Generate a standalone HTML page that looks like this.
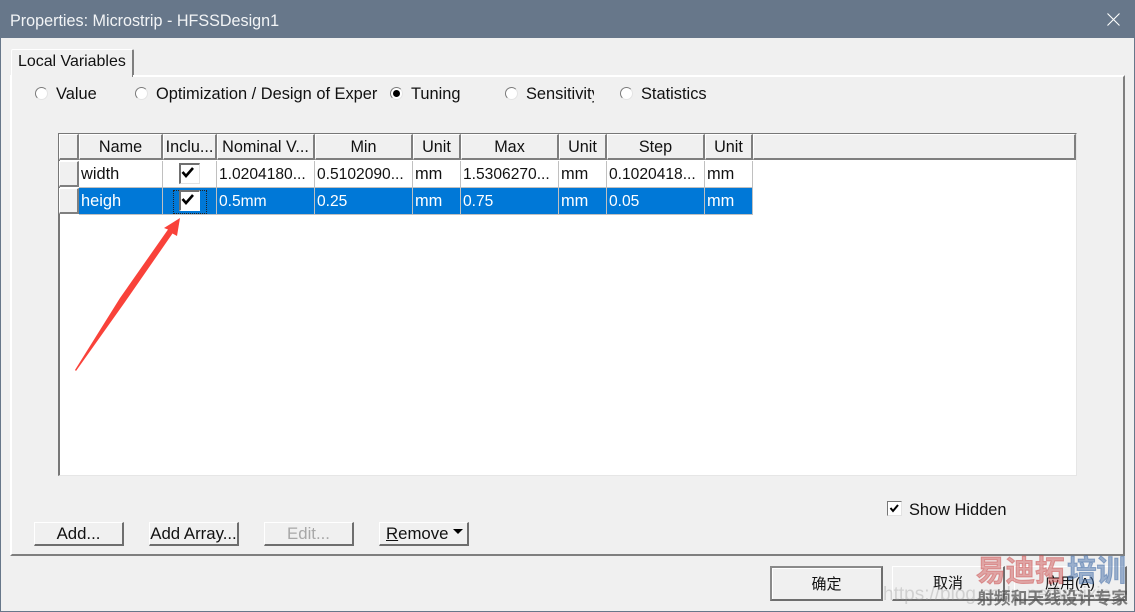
<!DOCTYPE html>
<html>
<head>
<meta charset="utf-8">
<style>
html,body{margin:0;padding:0;}
body{width:1135px;height:612px;position:relative;overflow:hidden;background:#f0f0f0;font-family:"Liberation Sans","Noto Sans CJK SC",sans-serif;font-size:16.4px;color:#111;}
div,span{position:absolute;box-sizing:border-box;white-space:nowrap;}
.lb{line-height:20px;height:20px;}
.hd{top:134px;height:26px;background:#f0f0f0;border-top:1px solid #fff;border-left:1px solid #fff;border-right:2px solid #7f7f7f;border-bottom:2px solid #7f7f7f;text-align:center;line-height:25px;overflow:hidden;font-size:16.2px;}
.rh{left:59px;width:20px;background:#f0f0f0;border-top:1px solid #fff;border-left:1px solid #fff;border-right:2px solid #7f7f7f;border-bottom:2px solid #7f7f7f;}
.c{height:27px;line-height:27px;padding-left:2px;border-right:1px solid #c0c0c0;border-bottom:1px solid #c0c0c0;overflow:hidden;font-size:15.6px;}
.t{font-size:16.4px;}
.s{background:#0078d7;color:#fff;}
.btn{top:522px;height:24px;width:90px;background:#f0f0f0;border-top:1px solid #fff;border-left:1px solid #fff;border-right:2px solid #6e6e6e;border-bottom:2px solid #6e6e6e;text-align:center;line-height:21px;font-size:16.8px;}
.bb{top:566px;height:35px;background:#f0f0f0;text-align:center;line-height:34px;font-size:15px;}
.rad{top:87px;width:13px;height:13px;border-radius:50%;background:#fff;border:1px solid #7a7a7a;border-bottom-color:#e4e4e4;border-right-color:#e4e4e4;}
.cb{background:#fff;border-top:2px solid #707070;border-left:2px solid #707070;border-right:1px solid #e2e2e2;border-bottom:1px solid #e2e2e2;}
svg{position:absolute;overflow:visible;}
</style>
</head>
<body>
<div style="left:0;top:0;width:1135px;height:38px;background:#67778a;"></div>
<div style="left:0;top:38px;width:1px;height:574px;background:#67778a;"></div>
<div style="left:1134px;top:38px;width:1px;height:574px;background:#67778a;"></div>
<div style="left:0;top:611px;width:1135px;height:1px;background:#67778a;"></div>
<div class="lb" style="left:10px;top:11px;color:#f2f4f6;font-size:16.15px;">Properties: Microstrip - HFSSDesign1</div>
<svg style="left:1107px;top:13px;" width="13" height="13"><path d="M0.5 0.5L12.5 12.5M12.5 0.5L0.5 12.5" stroke="#fff" stroke-width="1.1"/></svg>

<!-- tab panel -->
<div style="left:10px;top:75px;width:1115px;height:481px;border-top:2px solid #fff;border-left:2px solid #fff;border-right:2px solid #7f7f7f;border-bottom:2px solid #7f7f7f;"></div>
<div style="left:11px;top:49px;width:123px;height:28px;background:#f0f0f0;border-top:1px solid #fff;border-left:1px solid #fff;border-right:2px solid #7f7f7f;border-radius:2px 2px 0 0;"></div>
<div style="left:133px;top:75px;width:2px;height:2px;background:#fff;"></div>
<div class="lb" style="left:18px;top:52px;font-size:15.95px;">Local Variables</div>

<!-- radios -->
<div class="rad" style="left:35px;"></div><div class="lb" style="left:56px;top:84px;">Value</div>
<div class="rad" style="left:135px;"></div><div class="lb" style="left:156px;top:84px;">Optimization / Design of Exper</div>
<div class="rad" style="left:390px;"></div><div style="left:393px;top:90px;width:7px;height:7px;border-radius:50%;background:#000;"></div><div class="lb" style="left:411px;top:84px;">Tuning</div>
<div class="rad" style="left:505px;"></div><div class="lb" style="left:526px;top:84px;width:68px;overflow:hidden;">Sensitivity</div>
<div class="rad" style="left:620px;"></div><div class="lb" style="left:641px;top:84px;">Statistics</div>

<!-- grid -->
<div style="left:58px;top:133px;width:1019px;height:343px;background:#fff;border-top:1px solid #777;border-left:2px solid #777;border-right:1px solid #e6e6e6;border-bottom:1px solid #e6e6e6;"></div>
<div class="hd" style="left:59px;width:20px;"></div>
<div class="hd" style="left:79px;width:84px;">Name</div>
<div class="hd" style="left:163px;width:54px;">Inclu...</div>
<div class="hd" style="left:217px;width:98px;">Nominal V...</div>
<div class="hd" style="left:315px;width:98px;">Min</div>
<div class="hd" style="left:413px;width:48px;">Unit</div>
<div class="hd" style="left:461px;width:98px;">Max</div>
<div class="hd" style="left:559px;width:48px;">Unit</div>
<div class="hd" style="left:607px;width:98px;">Step</div>
<div class="hd" style="left:705px;width:48px;">Unit</div>
<div class="hd" style="left:753px;width:323px;"></div>

<div class="rh" style="top:161px;height:26px;"></div>
<div class="rh" style="top:188px;height:26px;"></div>

<div class="c t" style="left:79px;top:161px;width:84px;">width</div>
<div class="c" style="left:163px;top:161px;width:54px;"></div>
<div class="c" style="left:217px;top:161px;width:98px;">1.0204180...</div>
<div class="c" style="left:315px;top:161px;width:98px;">0.5102090...</div>
<div class="c t" style="left:413px;top:161px;width:48px;">mm</div>
<div class="c" style="left:461px;top:161px;width:98px;">1.5306270...</div>
<div class="c t" style="left:559px;top:161px;width:48px;">mm</div>
<div class="c" style="left:607px;top:161px;width:98px;">0.1020418...</div>
<div class="c t" style="left:705px;top:161px;width:48px;">mm</div>

<div class="c t s" style="left:79px;top:188px;width:84px;">heigh</div>
<div class="c s" style="left:163px;top:188px;width:54px;"></div>
<div class="c s" style="left:217px;top:188px;width:98px;">0.5mm</div>
<div class="c s" style="left:315px;top:188px;width:98px;">0.25</div>
<div class="c t s" style="left:413px;top:188px;width:48px;">mm</div>
<div class="c s" style="left:461px;top:188px;width:98px;">0.75</div>
<div class="c t s" style="left:559px;top:188px;width:48px;">mm</div>
<div class="c s" style="left:607px;top:188px;width:98px;">0.05</div>
<div class="c t s" style="left:705px;top:188px;width:48px;">mm</div>

<div class="cb" style="left:179px;top:163px;width:21px;height:21px;"></div>
<svg style="left:181px;top:165px;" width="16" height="16"><path d="M1.5 7L5 11L12 3" fill="none" stroke="#000" stroke-width="2.6"/></svg>
<div style="left:173px;top:190px;width:34px;height:24px;border:1px dotted #222;"></div>
<div class="cb" style="left:179px;top:190px;width:21px;height:21px;border-right-color:#fff;border-bottom-color:#fff;"></div>
<svg style="left:181px;top:192px;" width="16" height="16"><path d="M1.5 7L5 11L12 3" fill="none" stroke="#000" stroke-width="2.6"/></svg>

<!-- arrow -->
<svg style="left:0;top:0;" width="1135" height="612"><polygon points="180,218 164,228 168,229.5 120,298 75,370 76,371 125,302 172.5,233.5 177,236" fill="#f9423a"/></svg>

<!-- show hidden -->
<div style="left:887px;top:501px;width:15px;height:15px;background:#fff;border-top:1px solid #777;border-left:1px solid #777;border-right:1px solid #e2e2e2;border-bottom:1px solid #e2e2e2;"></div>
<svg style="left:889px;top:503px;" width="11" height="11"><path d="M1.5 5L4 8L9 2" fill="none" stroke="#000" stroke-width="2"/></svg>
<div class="lb" style="left:909px;top:500px;">Show Hidden</div>

<!-- buttons -->
<div class="btn" style="left:34px;">Add...</div>
<div class="btn" style="left:149px;">Add Array...</div>
<div class="btn" style="left:264px;color:#a8a8a8;">Edit...</div>
<div class="btn" style="left:379px;text-align:left;padding-left:6px;"><u>R</u>emove</div>
<svg style="left:453px;top:529px;" width="11" height="6"><path d="M0 0H10L5 5Z" fill="#000"/></svg>

<div class="bb" style="left:770px;width:113px;border:2px solid #6e6e6e;border-top-color:#8a8a8a;border-left-color:#8a8a8a;box-shadow:inset 1px 1px 0 #fff;">确定</div>
<div class="bb" style="left:892px;width:113px;border-top:1px solid #fff;border-left:1px solid #fff;border-right:2px solid #6e6e6e;border-bottom:2px solid #6e6e6e;">取消</div>
<div class="bb" style="left:1014px;width:113px;border-top:1px solid #fff;border-left:1px solid #fff;border-right:2px solid #6e6e6e;border-bottom:2px solid #6e6e6e;">应用(A)</div>

<!-- watermark -->
<div style="left:883px;top:585px;font-size:19px;line-height:20px;color:rgba(150,150,150,.35);">https://blog.csdn.net/weixin_</div>
<div style="left:976px;top:552px;font-size:29.5px;line-height:34px;font-weight:bold;color:rgba(200,60,60,.42);-webkit-text-stroke:1px rgba(200,60,60,.42);font-family:'Noto Sans CJK SC',sans-serif;">易迪拓</div>
<div style="left:1067px;top:552px;font-size:29.5px;line-height:34px;font-weight:bold;color:rgba(60,105,165,.48);-webkit-text-stroke:1px rgba(60,105,165,.48);font-family:'Noto Sans CJK SC',sans-serif;">培训</div>
<div style="left:977px;top:587px;font-size:16.8px;line-height:20px;font-weight:bold;color:rgba(80,80,80,.72);font-family:'Noto Sans CJK SC',sans-serif;">射频和天线设计专家</div>
</body>
</html>
